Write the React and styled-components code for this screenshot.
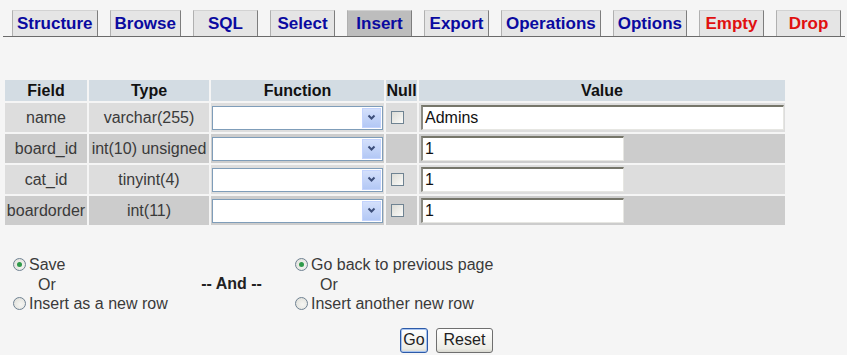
import React from "react";
import styled, { createGlobalStyle, css } from "styled-components";

const Global = createGlobalStyle`
  html, body { margin: 0; padding: 0; background: #f5f5f5; }
  body { font-family: "Liberation Sans", Arial, sans-serif; font-size: 16px; color: #222; }
  table { font-size: 16px; }
`;

const Page = styled.div`
  padding: 10px 2px 0 3px;
`;

const TabBar = styled.div`
  display: flex;
  gap: 12px;
  padding-left: 9px;
  border-bottom: 1px solid #6b6b6b;
`;

const Tab = styled.a`
  display: flex;
  align-items: center;
  justify-content: center;
  box-sizing: border-box;
  height: 26px;
  min-width: 65px;
  padding: 0 4px;
  background: ${(p) => (p.$active ? "#bdbdbd" : "#e5e5e5")};
  border-top: 1px solid #d2d2d2;
  border-left: 1px solid #b0b0b0;
  border-right: 1px solid #7d7d7d;
  font-weight: bold;
  font-size: 17px;
  color: ${(p) => (p.$danger ? "#e01010" : "#0a0aa0")};
  text-decoration: none;
  white-space: nowrap;
`;

const Grid = styled.table`
  margin-top: 41px;
  border-collapse: separate;
  border-spacing: 2px;
  table-layout: fixed;
  width: 784px;
`;

const Th = styled.th`
  height: 21px;
  padding: 0;
  background: #d3dce3;
  font-weight: bold;
  font-size: 16px;
  color: #111;
  text-align: center;
  width: ${(p) => p.$w}px;
`;

const Td = styled.td`
  height: 29px;
  padding: 0;
  background: ${(p) => (p.$odd ? "#dddddd" : "#cccccc")};
  font-size: 16px;
  color: #3a3a3a;
  text-align: ${(p) => (p.$center ? "center" : "left")};
  white-space: nowrap;
  vertical-align: middle;
  overflow: hidden;
`;

const Select = styled.div`
  display: flex;
  justify-content: flex-end;
  align-items: center;
  box-sizing: border-box;
  height: 24px;
  margin-left: 1px;
  width: 171px;
  background: #fff;
  border: 1px solid #7f9db9;
  padding: 0 1px;
`;

const SelectArrow = styled.span`
  display: flex;
  align-items: center;
  justify-content: center;
  width: 19px;
  height: 20px;
  background: linear-gradient(#d4e0fb, #b3c8f5);
  border: 1px solid #c3d3fd;
  box-sizing: border-box;
`;

const Check = styled.span`
  display: block;
  box-sizing: border-box;
  width: 13px;
  height: 13px;
  margin-left: 5px;
  border: 1px solid #6f8392;
  background: linear-gradient(135deg, #dcdcd6, #fbfbf9);
`;

const TextInput = styled.div`
  box-sizing: border-box;
  height: 25px;
  margin-left: 2px;
  width: ${(p) => (p.$wide ? 363 : 203)}px;
  background: #fff;
  border-top: 2px solid #76766a;
  border-left: 2px solid #8a8a82;
  border-right: 1px solid #e6e6e2;
  border-bottom: 1px solid #e6e6e2;
  padding-left: 2px;
  font-size: 16px;
  line-height: 22px;
  color: #111;
`;

const Options = styled.div`
  display: inline-grid;
  grid-template-columns: 175px 93px auto;
  align-items: center;
  margin: 28px 0 0 7px;
`;

const Col = styled.div`
  display: flex;
  flex-direction: column;
  padding-left: ${(p) => p.$indent || 0}px;
`;

const Middle = styled.div`
  text-align: center;
  font-weight: bold;
  color: #222;
`;

const Line = styled.label`
  display: flex;
  align-items: center;
  height: 19.5px;
  color: #3a3a3a;
  white-space: nowrap;
`;

const OrLine = styled.div`
  height: 19.5px;
  line-height: 19.5px;
  padding-left: 28px;
  color: #3a3a3a;
`;

const Radio = styled.span`
  position: relative;
  box-sizing: border-box;
  width: 13px;
  height: 13px;
  margin: 0 3px 0 3px;
  border-radius: 50%;
  border: 1px solid #6e8192;
  background: radial-gradient(circle at 60% 60%, #f6f6f3, #dcdcd6);
  ${(p) =>
    p.$checked &&
    css`
      &::after {
        content: "";
        position: absolute;
        left: 3px;
        top: 3px;
        width: 5px;
        height: 5px;
        border-radius: 50%;
        background: #2f9a4a;
      }
    `}
`;

const Buttons = styled.div`
  grid-column: 1 / -1;
  display: flex;
  justify-content: flex-end;
  gap: 8px;
  margin-top: 14px;
`;

const Button = styled.button`
  box-sizing: border-box;
  height: 25px;
  padding: 0 ${(p) => (p.$default ? 2 : 7)}px;
  font-family: "Liberation Sans", Arial, sans-serif;
  font-size: 16px;
  color: #222;
  border-radius: 3px;
  border: 1px solid ${(p) => (p.$default ? "#2c5aa8" : "#6f6f6f")};
  background: linear-gradient(#ffffff, #ececE6 85%, #d8d8d0);
  box-shadow: ${(p) => (p.$default ? "inset 0 0 0 1px #a8c4f0" : "none")};
`;

const tabs = [
  { label: "Structure" },
  { label: "Browse" },
  { label: "SQL" },
  { label: "Select" },
  { label: "Insert", active: true },
  { label: "Export" },
  { label: "Operations" },
  { label: "Options" },
  { label: "Empty", danger: true },
  { label: "Drop", danger: true },
];

const rows = [
  { field: "name", type: "varchar(255)", nullable: true, value: "Admins", wide: true },
  { field: "board_id", type: "int(10) unsigned", nullable: false, value: "1" },
  { field: "cat_id", type: "tinyint(4)", nullable: true, value: "1" },
  { field: "boardorder", type: "int(11)", nullable: true, value: "1" },
];

const Chevron = () => (
  <svg width="9" height="7" viewBox="0 0 9 7">
    <path d="M1.5 1.5 L4.5 4.5 L7.5 1.5" fill="none" stroke="#3d4f7a" strokeWidth="2" />
  </svg>
);

export default function App() {
  return (
    <>
      <Global />
      <Page>
        <TabBar>
          {tabs.map((t) => (
            <Tab key={t.label} $active={t.active} $danger={t.danger}>
              {t.label}
            </Tab>
          ))}
        </TabBar>
        <Grid>
          <thead>
            <tr>
              <Th $w={82}>Field</Th>
              <Th $w={120}>Type</Th>
              <Th $w={173}>Function</Th>
              <Th $w={31}>Null</Th>
              <Th>Value</Th>
            </tr>
          </thead>
          <tbody>
            {rows.map((r, i) => {
              const odd = i % 2 === 0;
              return (
                <tr key={r.field}>
                  <Td $odd={odd} $center>{r.field}</Td>
                  <Td $odd={odd} $center>{r.type}</Td>
                  <Td $odd={odd}>
                    <Select>
                      <SelectArrow>
                        <Chevron />
                      </SelectArrow>
                    </Select>
                  </Td>
                  <Td $odd={odd}>{r.nullable && <Check />}</Td>
                  <Td $odd={odd}>
                    <TextInput $wide={r.wide}>{r.value}</TextInput>
                  </Td>
                </tr>
              );
            })}
          </tbody>
        </Grid>
        <Options>
          <Col>
            <Line><Radio $checked />Save</Line>
            <OrLine>Or</OrLine>
            <Line><Radio />Insert as a new row</Line>
          </Col>
          <Middle>-- And --</Middle>
          <Col $indent={14}>
            <Line><Radio $checked />Go back to previous page</Line>
            <OrLine>Or</OrLine>
            <Line><Radio />Insert another new row</Line>
          </Col>
          <Buttons>
            <Button $default>Go</Button>
            <Button>Reset</Button>
          </Buttons>
        </Options>
      </Page>
    </>
  );
}
